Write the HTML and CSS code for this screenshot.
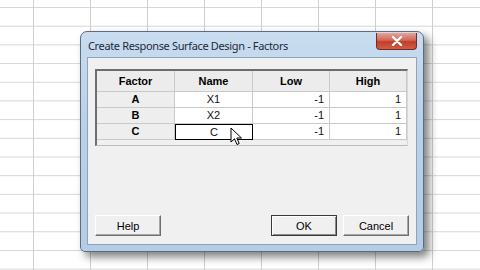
FILE: index.html
```html
<!DOCTYPE html>
<html lang="en">
<head>
    <meta charset="UTF-8">
    <title>Create Response Surface Design - Factors</title>
    <link rel="stylesheet" href="styles.css">
</head>
<body>
<div class="desktop">
    <div class="dialog">
        <div class="titlebar">
            <span class="title">Create Response Surface Design - Factors</span>
            <button class="close" type="button">
                <svg width="12" height="10" viewBox="0 0 12 10"><path d="M2 1 L10 9 M10 1 L2 9" stroke="#fff" stroke-width="2.4" stroke-linecap="round"/></svg>
            </button>
        </div>
        <div class="client">
            <div class="grid-box">
                <div class="factors">
                    <div class="hd">Factor</div>
                    <div class="hd">Name</div>
                    <div class="hd">Low</div>
                    <div class="hd">High</div>

                    <div class="rowhd">A</div>
                    <div class="cell name">X1</div>
                    <div class="cell num">-1</div>
                    <div class="cell num">1</div>

                    <div class="rowhd">B</div>
                    <div class="cell name">X2</div>
                    <div class="cell num">-1</div>
                    <div class="cell num">1</div>

                    <div class="rowhd">C</div>
                    <div class="cell name current">C</div>
                    <div class="cell num">-1</div>
                    <div class="cell num">1</div>
                </div>
            </div>
            <div class="buttons">
                <button class="btn" type="button">Help</button>
                <div class="btn-group">
                    <button class="btn default" type="button">OK</button>
                    <button class="btn" type="button">Cancel</button>
                </div>
            </div>
            <svg class="cursor" width="13" height="20" viewBox="0 0 13 20">
                <path d="M1 1 L1 15 L4.5 11.8 L7 17.5 L9.2 16.5 L6.8 11 L11.5 11 Z" fill="#fff" stroke="#000" stroke-width="1" stroke-linejoin="round"/>
            </svg>
        </div>
    </div>
</div>
</body>
</html>
```

FILE: styles.css
```css
body { margin: 0; background: #fff; font-family: 'Liberation Sans', Arial, sans-serif; }

.desktop {
    width: 480px; height: 270px; overflow: hidden;
    background-color: #fff;
    background-image:
        linear-gradient(to right, #cfcfcf 1px, transparent 1px),
        linear-gradient(to bottom, #d6d6d6 1px, transparent 1px);
    background-size: 57px 18.7px;
    background-position: 33px 7px;
    padding-top: 31px; box-sizing: border-box;
}

.dialog {
    margin-left: 80px; width: 344px; height: 221px; box-sizing: border-box;
    border: 1px solid #5d6b7c; border-radius: 7px 7px 5px 5px;
    background: linear-gradient(to bottom, #c9dcf0, #b9d1ea 40%, #b4cce6);
    box-shadow: 5px 5px 9px rgba(0,0,0,0.5);
    display: flex; flex-direction: column;
    padding: 0 6px 6px 6px;
}

.titlebar { height: 25px; display: flex; align-items: flex-start; }
.title {
    font-family: 'Noto Sans', 'Open Sans', sans-serif; font-size: 11px; letter-spacing: -0.35px;
    color: #1e2a36; margin: 6px 0 0 1px; flex: 1;
}
.close {
    width: 41px; height: 17px; margin: 1px 0 0 0; padding: 0;
    border: 1px solid #6b2d28; border-top: none; border-radius: 0 0 4px 4px;
    background: linear-gradient(to bottom, #e7a394, #d0665a 45%, #c13d2a 55%, #d45c43);
    display: flex; align-items: center; justify-content: center;
}

.client {
    position: relative; flex: 1;
    background: #f0f0f0; border: 1px solid #8ea4bd;
    padding: 11px 7px 8px 7px;
    display: flex; flex-direction: column; justify-content: space-between;
}

.grid-box {
    width: 310px; height: 74px;
    border-top: 2px solid #6d6d6d; border-left: 2px solid #6d6d6d;
    border-right: 1px solid #d8d8d8; border-bottom: 1px solid #bcbcbc;
    background: #f0f0f0;
}
.factors {
    display: grid; grid-template-columns: 78px 78px 77px 77px;
    grid-template-rows: 21px 16px 16px 16px;
    font-size: 11px; color: #000;
}
.hd {
    background: #ececec; font-weight: bold; text-align: center; line-height: 21px;
    border-right: 1px solid #c9c9c9; border-bottom: 1px solid #c9c9c9;
}
.rowhd {
    background: #eeeeee; font-weight: bold; text-align: center; line-height: 15px;
    border-right: 1px solid #c9c9c9; border-bottom: 1px solid #c9c9c9;
}
.cell {
    background: #fff; line-height: 15px; color: #111;
    border-right: 1px solid #c9c9c9; border-bottom: 1px solid #c9c9c9;
}
.name { text-align: center; }
.num { text-align: right; padding-right: 5px; }
.current { border: 1px solid #000; line-height: 14px; }

.buttons { display: flex; justify-content: space-between; align-items: flex-end; }
.btn-group { display: flex; gap: 6px; }
.btn {
    width: 66px; height: 21px; padding: 0;
    font-family: 'Liberation Sans', Arial, sans-serif; font-size: 11px; color: #000;
    background: #f0f0f0;
    border: 1px solid; border-color: #fff #6e6e6e #6e6e6e #fff;
    box-shadow: inset -1px -1px 0 #a8a8a8;
}
.btn.default { border: 1px solid #3a3a3a; box-shadow: inset 1px 1px 0 #fff, inset -1px -1px 0 #8a8a8a; }

.cursor { position: absolute; left: 142px; top: 69px; }
```
